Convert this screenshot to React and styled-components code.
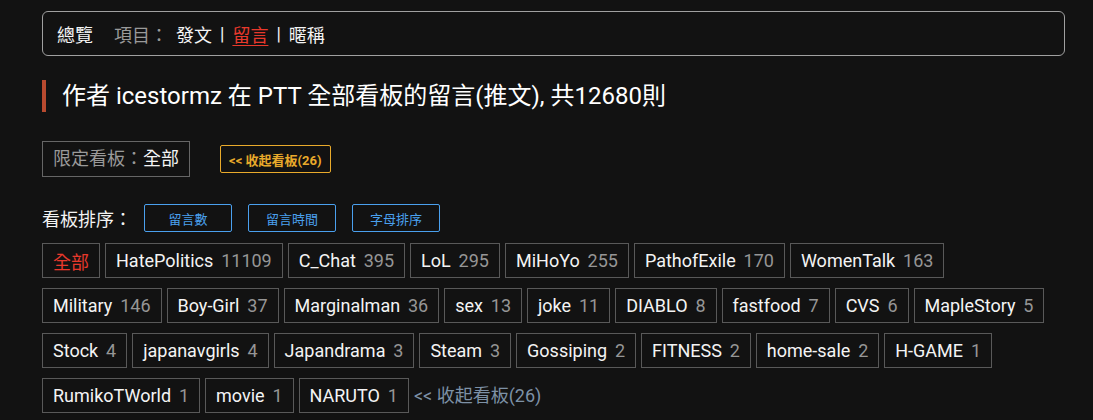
import React from "react";
import styled, { createGlobalStyle } from "styled-components";

const Global = createGlobalStyle`
  html, body { margin: 0; padding: 0; background: #121212; }
  body { font-family: Roboto, "Noto Sans CJK TC", sans-serif; color: #f2f2f2; }
`;

const Page = styled.div`
  padding: 11px 28px 0 42px;
`;

const Nav = styled.nav`
  display: flex;
  align-items: center;
  height: 43px;
  padding: 0 14px;
  border: 1px solid #a0a0a0;
  border-radius: 6px;
  font-size: 18px;
`;

const NavHome = styled.span`
  color: #f4f4f4;
  margin-right: 21px;
`;

const NavLabel = styled.span`
  color: #9a9a9a;
  margin-right: 8px;
`;

const NavLink = styled.span`
  color: ${(p) => (p.$active ? "#e8392c" : "#f4f4f4")};
  text-decoration: ${(p) => (p.$active ? "underline" : "none")};
  text-underline-offset: 3px;
`;

const Sep = styled.span`
  color: #f4f4f4;
  margin: 0 8px;
`;

const Heading = styled.h1`
  margin: 24px 0 0;
  border-left: 4px solid #b84a2f;
  padding-left: 16px;
  font-size: 24px;
  line-height: 32px;
  font-weight: 400;
  color: #ffffff;
`;

const FilterRow = styled.div`
  display: flex;
  align-items: center;
  gap: 30px;
  margin-top: 29px;
`;

const FilterBox = styled.div`
  height: 34px;
  line-height: 34px;
  padding: 0 10px;
  border: 1px solid #666;
  font-size: 18px;
  color: #f4f4f4;
`;

const Muted = styled.span`
  color: #9a9a9a;
`;

const OutlineButton = styled.button`
  height: 28px;
  padding: 0 ${(p) => (p.$width ? 0 : 8)}px;
  width: ${(p) => (p.$width ? `${p.$width}px` : "auto")};
  border: 1px solid ${(p) => p.$color};
  border-radius: 2px;
  background: transparent;
  color: ${(p) => p.$color};
  font-family: Roboto, "Noto Sans CJK TC", sans-serif;
  font-size: 13px;
  font-weight: ${(p) => (p.$bold ? 700 : 400)};
  cursor: pointer;
`;

const SortRow = styled.div`
  display: flex;
  align-items: center;
  gap: 16px;
  margin-top: 27px;
`;

const SortLabel = styled.span`
  font-size: 18px;
  color: #f4f4f4;
  margin-right: -4px;
`;

const Tags = styled.div`
  display: flex;
  flex-wrap: wrap;
  align-items: center;
  column-gap: 5px;
  row-gap: 10px;
  margin-top: 11px;
`;

const Tag = styled.a`
  display: flex;
  align-items: center;
  height: 33px;
  padding: 0 10px;
  border: 1px solid #595959;
  font-size: 18px;
  color: ${(p) => (p.$active ? "#e8392c" : "#f4f4f4")};
  text-decoration: none;
`;

const Count = styled.span`
  color: #969696;
  margin-left: 7.85px;
`;

const CollapseLink = styled.a`
  font-size: 18px;
  color: #7d91a6;
  line-height: 35px;
`;

const boards = [
  ["HatePolitics", 11109],
  ["C_Chat", 395],
  ["LoL", 295],
  ["MiHoYo", 255],
  ["PathofExile", 170],
  ["WomenTalk", 163],
  ["Military", 146],
  ["Boy-Girl", 37],
  ["Marginalman", 36],
  ["sex", 13],
  ["joke", 11],
  ["DIABLO", 8],
  ["fastfood", 7],
  ["CVS", 6],
  ["MapleStory", 5],
  ["Stock", 4],
  ["japanavgirls", 4],
  ["Japandrama", 3],
  ["Steam", 3],
  ["Gossiping", 2],
  ["FITNESS", 2],
  ["home-sale", 2],
  ["H-GAME", 1],
  ["RumikoTWorld", 1],
  ["movie", 1],
  ["NARUTO", 1],
];

export default function App() {
  return (
    <Page>
      <Global />
      <Nav>
        <NavHome>總覽</NavHome>
        <NavLabel>項目：</NavLabel>
        <NavLink>發文</NavLink>
        <Sep>|</Sep>
        <NavLink $active>留言</NavLink>
        <Sep>|</Sep>
        <NavLink>暱稱</NavLink>
      </Nav>

      <Heading>作者 icestormz 在 PTT 全部看板的留言(推文), 共12680則</Heading>

      <FilterRow>
        <FilterBox>
          <Muted>限定看板：</Muted>全部
        </FilterBox>
        <OutlineButton $color="#e9aa2b" $bold>
          &lt;&lt; 收起看板(26)
        </OutlineButton>
      </FilterRow>

      <SortRow>
        <SortLabel>看板排序：</SortLabel>
        <OutlineButton $color="#4aa0ee" $width={88}>留言數</OutlineButton>
        <OutlineButton $color="#4aa0ee" $width={88}>留言時間</OutlineButton>
        <OutlineButton $color="#4aa0ee" $width={88}>字母排序</OutlineButton>
      </SortRow>

      <Tags>
        <Tag $active>全部</Tag>
        {boards.map(([name, n]) => (
          <Tag key={name}>
            {name}
            <Count>{n}</Count>
          </Tag>
        ))}
        <CollapseLink>&lt;&lt; 收起看板(26)</CollapseLink>
      </Tags>
    </Page>
  );
}
